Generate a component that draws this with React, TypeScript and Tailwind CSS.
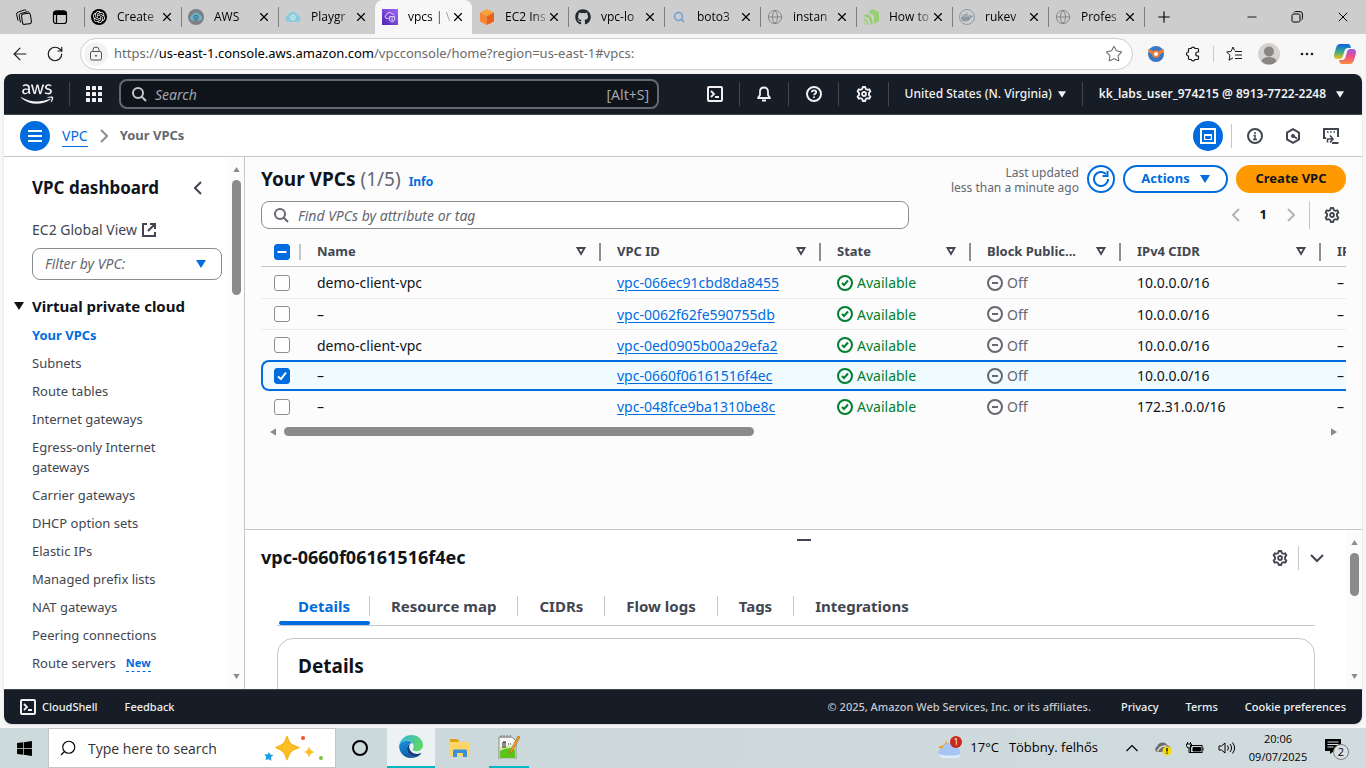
import React from "react";
import { FaAws, FaGithub, FaWindows } from "react-icons/fa";
import { SiOpenai, SiDocker } from "react-icons/si";
import { Globe, X, Plus, Search, RotateCw, ArrowLeft, Star, Minus } from "lucide-react";

const EMBER = "font-['Noto_Sans',sans-serif]";
const SEGOE = "font-['Open_Sans',sans-serif]";

type IconProps = { className?: string };

function Svg({ className = "size-4", children }: React.PropsWithChildren<IconProps>) {
  return (
    <svg viewBox="0 0 16 16" fill="none" stroke="currentColor" strokeWidth="2" aria-hidden="true" className={`shrink-0 ${className}`}>
      {children}
    </svg>
  );
}

function Gear({ className }: IconProps) {
  return (
    <Svg className={className}>
      <path
        strokeWidth="1.9"
        strokeLinejoin="round"
        d="M6.2 3 6.8 1h2.400L9.800 3l1.400.8 2-.5 1.200 2.100L13 6.900v2.200l1.400 1.500-1.200 2.100-2-.5-1.400.8-.6 2H6.800l-.6-2-1.400-.8-2 .5-1.200-2.100L3 9.100V6.900L1.600 5.400l1.200-2.100 2 .5Z"
      />
      <circle cx="8" cy="8" r="2" strokeWidth="1.8" />
    </Svg>
  );
}

function ShellIcon({ className }: IconProps) {
  return (
    <Svg className={className}>
      <rect x="1" y="1" width="14" height="14" rx="1" />
      <path d="m4 5 3 3-3 3M8 11h4" strokeWidth="1.8" />
    </Svg>
  );
}

function Caret({ className = "h-[8px] w-[10px]" }: IconProps) {
  return (
    <svg viewBox="0 0 10 8" fill="currentColor" aria-hidden="true" className={`shrink-0 ${className}`}>
      <path d="M0 0h10L5 8Z" />
    </svg>
  );
}

function Chevron({ dir, className = "h-[14px] w-[8px]" }: IconProps & { dir: "left" | "right" }) {
  return (
    <svg viewBox="0 0 8 14" fill="none" stroke="currentColor" strokeWidth="2" aria-hidden="true" className={`shrink-0 ${className}`}>
      <path d={dir === "left" ? "M7 1 1 7l6 6" : "m1 1 6 6-6 6"} />
    </svg>
  );
}

/* ---------- browser ---------- */

function CloudEye({ muted = false }: { muted?: boolean }) {
  return (
    <svg viewBox="0 0 16 16" className="size-4 shrink-0" aria-hidden="true">
      {muted && <circle cx="8" cy="8" r="8" fill="#7d8083" />}
      <path
        d={muted ? "M4.500 11.500a2.700 2.700 0 0 1-.3-5.300A4 4 0 0 1 11.700 6.100a2.800 2.800 0 0 1 .3 5.400Z" : "M3.500 13a3.400 3.400 0 0 1-.4-6.700A5 5 0 0 1 12.700 6.200a3.500 3.500 0 0 1 .3 6.800Z"}
        fill={muted ? "#67b7d1" : "#8ccbdc"}
      />
      <circle cx="8" cy="8.500" r="2.300" fill="none" stroke={muted ? "#4b6570" : "#d5eef5"} strokeWidth="1" />
      <circle cx="8" cy="8.500" r=".9" fill={muted ? "#4b6570" : "#d5eef5"} />
    </svg>
  );
}

function VpcIcon() {
  return (
    <svg viewBox="0 0 16 16" className="size-4 shrink-0" aria-hidden="true">
      <defs>
        <linearGradient id="vpcg" x1="0" y1="1" x2="1" y2="0">
          <stop offset="0" stopColor="#4d27aa" />
          <stop offset="1" stopColor="#a166ff" />
        </linearGradient>
      </defs>
      <path fill="url(#vpcg)" d="M0 0h16v16H0z" />
      <path
        d="M6.500 9.500H5a2 2 0 0 1-.4-3.900A3 3 0 0 1 10 4.800c1.200-.1 2 .7 2.100 1.500M7.600 7.600h5v3c0 1.200-1.500 2.100-2.500 2.500-1-.4-2.500-1.300-2.500-2.500ZM10.100 8.500v3.500"
        fill="none"
        stroke="#fff"
        strokeWidth=".8"
      />
    </svg>
  );
}

function Ec2Icon() {
  return (
    <svg viewBox="0 0 16 16" className="size-4 shrink-0" aria-hidden="true">
      <path d="m8 0 7 3.500L8 7 1 3.500Z" fill="#f9a13a" />
      <path d="M1 3.500 8 7v9l-7-3.500Z" fill="#f58536" />
      <path d="M15 3.500 8 7v9l7-3.500Z" fill="#e8601c" />
    </svg>
  );
}

function GreenIcon() {
  return (
    <svg viewBox="0 0 16 16" className="size-4 shrink-0" fill="#98cf74" aria-hidden="true">
      <path d="m5 3 5-3 6 3.500v8.500l-5 3V6.500Z" />
      <path d="M1 6.500 4 5c3 1 5 3.500 5.500 7v3l-2 1C7.500 11 5.500 8 1 7.500ZM1 9.500c2.500.5 4 2.500 4.500 6H3.800C3.500 13 2.500 12 1 11.500ZM1 13l1.500 2.500H1Z" />
    </svg>
  );
}

function OpenAiIcon() {
  return (
    <span className="flex size-4 shrink-0 items-center justify-center rounded-full bg-black text-white">
      <SiOpenai className="size-3" />
    </span>
  );
}

function DockerIcon() {
  return (
    <span className="flex size-4 shrink-0 items-center justify-center rounded-full border border-[#8b9ba3] text-[#8b9ba3]">
      <SiDocker className="size-3" />
    </span>
  );
}

function GlobeIcon() {
  return <Globe className="size-4 shrink-0 text-[#858585]" strokeWidth={1.5} />;
}

const TABS: { title: string; icon: React.ReactNode; active?: boolean }[] = [
  { title: "Create", icon: <OpenAiIcon /> },
  { title: "AWS", icon: <CloudEye muted /> },
  { title: "Playgr", icon: <CloudEye /> },
  { title: "vpcs | \\", icon: <VpcIcon />, active: true },
  { title: "EC2 Ins", icon: <Ec2Icon /> },
  { title: "vpc-lo", icon: <FaGithub className="size-4 shrink-0 text-[#24292e]" /> },
  { title: "boto3", icon: <Search className="size-4 shrink-0 p-0.5 text-[#6a9fd0]" strokeWidth={3} /> },
  { title: "instan", icon: <GlobeIcon /> },
  { title: "How to", icon: <GreenIcon /> },
  { title: "rukev", icon: <DockerIcon /> },
  { title: "Profes", icon: <GlobeIcon /> },
];

function BrowserTabs() {
  return (
    <div className="flex h-[34px] shrink-0 items-stretch bg-[#cdcdcd] text-[12px] text-black">
      <div className="flex w-[84px] items-center gap-5 pl-4">
        <button aria-label="Workspaces">
          <svg viewBox="0 0 16 16" fill="none" stroke="currentColor" className="size-4" aria-hidden="true">
            <rect x="6" y="4.500" width="9" height="10.500" rx="2" transform="rotate(-8 11 10)" />
            <path d="M4.500 13.500 3.200 6.800a2 2 0 0 1 1.500-2.300l6.500-1.700c1-.2 1.800.1 2.200.9" />
            <path d="M2 11.500.6 5.500a2 2 0 0 1 1.500-2.300L8 1c1-.3 1.800 0 2.200.8" />
          </svg>
        </button>
        <button aria-label="Tab actions">
          <svg viewBox="0 0 16 16" fill="none" stroke="currentColor" strokeWidth="1.200" className="size-4" aria-hidden="true">
            <rect x="1.500" y="2" width="13" height="12.500" rx="2.500" />
            <path d="M2 3.500c.5-1 1.200-1.500 2-1.500h8c.8 0 1.500.5 2 1.500V5.500H2Z" fill="currentColor" />
            <path d="M4.500 5v9" />
          </svg>
        </button>
      </div>
      {TABS.map((t, i) => (
        <div
          key={t.title}
          className={`flex shrink-0 items-center pr-1.5 ${i < 4 ? "w-[97px]" : "w-24"} ${
            t.active ? "rounded-t-lg bg-[#f7f7f7]" : ""
          }`}
        >
          <span className={`mr-1.5 h-5 w-px shrink-0 ${i === 3 || i === 4 ? "bg-transparent" : "bg-[#7f7f7f]"}`} />
          {t.icon}
          <span className="ml-2.5 flex-1 whitespace-nowrap [mask-image:linear-gradient(to_right,black_65%,rgba(0,0,0,0.25)_100%)]">{t.title}</span>
          <button aria-label={`Close ${t.title}`} className="flex size-4 shrink-0 items-center justify-center">
            <X className="size-3.5" strokeWidth={2} />
          </button>
        </div>
      ))}
      <div className="flex flex-1 items-center">
        <span className="h-5 w-px bg-[#7f7f7f]" />
        <button aria-label="New tab" className="ml-2.5">
          <Plus className="size-[18px]" strokeWidth={1.5} />
        </button>
        <div className="ml-auto flex items-center gap-8 pr-[15px]">
          <button aria-label="Minimise">
            <Minus className="size-3.5" strokeWidth={1.5} />
          </button>
          <button aria-label="Restore">
            <svg viewBox="0 0 12 12" fill="none" stroke="currentColor" className="size-3" aria-hidden="true">
              <rect x="1" y="3" width="8" height="8" rx="1.500" />
              <path d="M3 1.500c.3-.6.8-.9 1.500-.9H9A2.400 2.400 0 0 1 11.400 3v4.500c0 .7-.3 1.200-.9 1.500" />
            </svg>
          </button>
          <button aria-label="Close window">
            <X className="size-4" strokeWidth={1.5} />
          </button>
        </div>
      </div>
    </div>
  );
}

function AddressBar() {
  return (
    <div className="flex h-10 shrink-0 items-center bg-[#f7f7f7] px-2.5 text-[#1b1b1b]">
      <button aria-label="Back" className="mr-4">
        <ArrowLeft className="size-5" strokeWidth={1.4} />
      </button>
      <button aria-label="Refresh" className="mr-4">
        <RotateCw className="size-[18px]" strokeWidth={1.6} />
      </button>
      <div className="flex h-8 flex-1 items-center rounded-full border border-[#d0ccd2] bg-white px-[3px]">
        <button aria-label="Site information" className="flex size-6 items-center justify-center rounded-full bg-[#f3f3f3] text-[#555]">
          <svg viewBox="0 0 16 16" fill="none" stroke="currentColor" className="size-4" aria-hidden="true">
            <rect x="2.500" y="5.500" width="11" height="8.500" rx="1.500" />
            <path d="M5 5.500V4a3 3 0 0 1 6 0v1.500" />
            <circle cx="8" cy="9.700" r=".6" fill="currentColor" />
          </svg>
        </button>
        <span className={`ml-1.5 flex-1 text-[13px] text-[#6b6b6b] ${EMBER}`}>
          https://<span className="text-black">us-east-1.console.aws.amazon.com</span>/vpcconsole/home?region=us-east-1#vpcs:
        </span>
        <button aria-label="Add to favourites" className="mr-1.5">
          <Star className="size-[18px] text-[#6b6b6b]" strokeWidth={1.4} />
        </button>
      </div>
      <div className="ml-3.5 flex items-center">
        <button aria-label="Extension" className="mr-5">
          <svg viewBox="0 0 18 18" className="size-[18px]" aria-hidden="true">
            <circle cx="9" cy="9" r="8" fill="#3b78c4" />
            <path d="M.8 3.800 6 6h6l5.200-2.200-1.500 4L12.500 9.500h-7L2.300 7.800Z" fill="#f27b35" />
            <circle cx="9" cy="9" r="3.800" fill="#f27b35" />
            <circle cx="9" cy="9" r="2" fill="#fff" />
          </svg>
        </button>
        <button aria-label="Extensions">
          <svg viewBox="0 0 16 16" fill="none" stroke="currentColor" strokeLinejoin="round" strokeWidth="1.200" className="size-4" aria-hidden="true">
            <path d="M4.500 2.500h1.700a2 1.900 0 0 1 3.800 0h2.500a1 1 0 0 1 1 1V6h-.8a2 2 0 0 0 0 4h.8v2.500a1 1 0 0 1-1 1H10a2 1.900 0 0 1-3.800 0H4.500a1 1 0 0 1-1-1V10a2 2 0 0 1 0-4V3.500a1 1 0 0 1 1-1Z" />
          </svg>
        </button>
        <span className="mx-3 h-4 w-px bg-[#c8c8c8]" />
        <button aria-label="Favourites" className="mr-4">
          <svg viewBox="0 0 16 16" fill="none" stroke="currentColor" strokeLinejoin="round" className="size-4" aria-hidden="true">
            <path d="M8.500 4.500 7 1 5 5.500.6 6 4 9.200l-1 5 4-2.400M9 5.500h7M9 9h7M9 12.500h7" />
          </svg>
        </button>
        <button aria-label="Profile" className="mr-5">
          <svg viewBox="0 0 22 22" className="size-[22px]" aria-hidden="true">
            <circle cx="11" cy="11" r="11" fill="#d5d2cf" />
            <circle cx="11" cy="8.500" r="5" fill="#8b8681" />
            <path d="M3.500 18.500a7.500 4.500 0 0 1 15 0 11 11 0 0 1-15 0Z" fill="#8b8681" />
          </svg>
        </button>
        <button aria-label="Settings and more" className="mr-5">
          <svg viewBox="0 0 14 4" className="h-1 w-3.5" fill="currentColor" aria-hidden="true">
            <circle cx="2" cy="2" r="1.300" />
            <circle cx="7" cy="2" r="1.300" />
            <circle cx="12" cy="2" r="1.300" />
          </svg>
        </button>
        <button aria-label="Copilot">
          <svg viewBox="0 0 22 20" className="h-5 w-[22px]" aria-hidden="true">
            <defs>
              <linearGradient id="cpa" x1="0" y1="0" x2="0" y2="1">
                <stop offset="0" stopColor="#0a62e8" />
                <stop offset=".5" stopColor="#35a98b" />
                <stop offset="1" stopColor="#f5c518" />
              </linearGradient>
              <linearGradient id="cpb" x1="0" y1="0" x2="0" y2="1">
                <stop offset="0" stopColor="#9b5be8" />
                <stop offset=".5" stopColor="#ee4f86" />
                <stop offset="1" stopColor="#fb8c3c" />
              </linearGradient>
            </defs>
            <path d="M6 0h8c2 0 2.500 2 3 4h-3c-2 0-3 1-3.500 3L9 12c-.5 2-1.500 3-3.500 3H3c-3 0-3.500-3-2.500-6l1.500-5c.8-2.600 2-4 4-4Z" fill="url(#cpa)" />
            <path d="M16 20H8c-2 0-2.500-2-3-4h3c2 0 3-1 3.500-3L13 8c.5-2 1.500-3 3.500-3H19c3 0 3.500 3 2.500 6L20 16c-.8 2.600-2 4-4 4Z" fill="url(#cpb)" />
          </svg>
        </button>
      </div>
    </div>
  );
}

/* ---------- console chrome ---------- */

function Divider({ className = "" }: IconProps) {
  return <span className={`h-6 w-px shrink-0 bg-[#424650] ${className}`} />;
}

function ConsoleHeader() {
  return (
    <header className="flex h-[41px] shrink-0 items-center border-b border-[#424650] bg-[#161d26] pl-4 pr-[18px] text-[12px] font-semibold text-[#f0f0f3]">
      <a href="#home" aria-label="AWS home">
        <FaAws className="h-[26px] w-[34px]" />
      </a>
      <Divider className="ml-[15px] mr-4" />
      <button aria-label="All services">
        <svg viewBox="0 0 16 16" fill="currentColor" className="size-4" aria-hidden="true">
          {[0, 6, 12].map((y) => [0, 6, 12].map((x) => <rect key={`${x}-${y}`} x={x} y={y} width="4" height="4" rx=".6" />))}
        </svg>
      </button>
      <label className="ml-[17px] flex h-[30px] w-[540px] items-center rounded-lg border-2 border-[#656871] bg-[#0f141a] pl-2.5 pr-2 font-normal">
        <Svg className="size-4 text-[#c6c6cd]">
          <circle cx="7" cy="7" r="5" />
          <path d="m10.500 10.500 4.500 4.500" />
        </Svg>
        <input aria-label="Search" placeholder="Search" className="ml-2 min-w-0 flex-1 bg-transparent text-[14px] outline-none placeholder:italic placeholder:text-[#a4a4ad]" />
        <span className="text-[14px] text-[#a4a4ad]">[Alt+S]</span>
      </label>
      <div className="ml-auto flex items-center">
        <button aria-label="CloudShell">
          <ShellIcon />
        </button>
        <Divider className="mx-4" />
        <button aria-label="Notifications">
          <Svg>
            <path d="M8 1.500c-2.500 0-4 1.800-4 4.200V9l-2 3h12l-2-3V5.700c0-2.400-1.500-4.200-4-4.200Z" strokeLinejoin="round" strokeWidth="1.8" />
            <path d="M6 14.500h4" />
          </Svg>
        </button>
        <Divider className="ml-4 mr-[17px]" />
        <button aria-label="Help">
          <Svg>
            <circle cx="8" cy="8" r="7" />
            <path d="M5.800 6.200C5.900 5 6.800 4.300 8 4.300s2.200.8 2.200 1.900c0 1.500-2.200 1.500-2.200 3.100M8 10.500V12" strokeWidth="1.8" />
          </Svg>
        </button>
        <Divider className="ml-4 mr-[17px]" />
        <button aria-label="Settings">
          <Gear />
        </button>
        <Divider className="mx-4" />
        <button className="flex items-center font-medium">
          <span>United States (N. Virginia)</span>
          <Caret className="ml-1.5 h-[7px] w-2" />
        </button>
        <Divider className="mx-4" />
        <button className="flex items-center">
          <span>kk_labs_user_974215 @ 8913-7722-2248</span>
          <Caret className="ml-2.5 h-[7px] w-2" />
        </button>
      </div>
    </header>
  );
}

function BreadcrumbBar() {
  return (
    <div className="flex h-[42px] shrink-0 items-center border-b border-[#c6c6cd] bg-white px-4 text-[13px]">
      <button aria-label="Toggle navigation" className="flex size-[30px] items-center justify-center rounded-full bg-[#006ce0] text-white">
        <Svg>
          <path d="M1 3h14M1 8h14M1 13h14" />
        </Svg>
      </button>
      <nav aria-label="Breadcrumbs" className="ml-3 flex items-center">
        <a href="#vpc" className="border-b border-[#006ce0] text-[14px] text-[#006ce0]">VPC</a>
        <Chevron dir="right" className="mx-3 h-[14px] w-2 text-[#8c8c94]" />
        <span className="font-bold text-[#656871]">Your VPCs</span>
      </nav>
      <div className="ml-auto flex items-center pr-[7px] text-[#424650]">
        <button aria-label="Split panel" className="flex size-[30px] items-center justify-center rounded-full bg-[#006ce0] text-white">
          <Svg>
            <path d="M1 1h14v14H1z" />
            <path d="M4.600 7.500h6.800v4H4.600z" strokeWidth="1.200" />
            <path d="M4 7h8" />
          </Svg>
        </button>
        <span className="ml-2 mr-[15px] h-6 w-px bg-[#c6c6cd]" />
        <button aria-label="Info" className="mr-[22px]">
          <Svg>
            <circle cx="8" cy="8" r="7" />
            <path d="M8 4v2M6.500 7.500H8V12M6 11.500h4" strokeWidth="1.500" />
          </Svg>
        </button>
        <button aria-label="Diagnostics" className="mr-[22px]">
          <Svg>
            <path d="m8 1.200 6 3.400v6.800l-6 3.400-6-3.400V4.600Z" />
            <circle cx="8" cy="8" r="1.300" fill="currentColor" strokeWidth="1.500" />
            <path d="m8 8 4 2.500" />
          </Svg>
        </button>
        <button aria-label="Console recorder">
          <Svg>
            <path d="M3 10H1V1h14v8M9 15h6.500" />
            <path d="M4 4h1.500M7.200 4h1.500M10.500 4H12" strokeWidth="1.500" />
            <path d="M4.500 14.500V11h5M7 7.500 10 11l-3 3.500" strokeWidth="1.600" />
          </Svg>
        </button>
      </div>
    </div>
  );
}

/* ---------- side navigation ---------- */

const LINKS = [
  "Subnets",
  "Route tables",
  "Internet gateways",
  "Egress-only Internet gateways",
  "Carrier gateways",
  "DHCP option sets",
  "Elastic IPs",
  "Managed prefix lists",
  "NAT gateways",
  "Peering connections",
];

function ScrollTrack({ thumb }: { thumb: string }) {
  return (
    <div className="flex w-4 shrink-0 flex-col items-center bg-[#fcfcfc] py-[10px] text-[#8b8b8b]" aria-hidden="true">
      <Caret className="h-[5px] w-[9px] rotate-180" />
      <span className={`mt-2 w-[9px] rounded-full bg-[#8b8b8b] ${thumb}`} />
      <Caret className="mt-auto h-[5px] w-[9px]" />
    </div>
  );
}

function SideNav() {
  return (
    <aside className="flex w-[241px] shrink-0 border-r border-[#c6c6cd] bg-white text-[13px] leading-5 text-[#424650]">
      <div className="flex-1 overflow-hidden pl-7 pr-1.5">
        <div className="mt-5 flex items-center justify-between pr-5">
          <h2 className="text-[17px] font-bold leading-[22px] text-[#0f141a]">VPC dashboard</h2>
          <button aria-label="Close navigation">
            <Chevron dir="left" />
          </button>
        </div>
        <a href="#global" className="mt-[21px] flex items-center gap-1 text-[14px]">
          EC2 Global View
          <Svg className="size-4">
            <path d="M6 2H2v12h12v-4M9 2h5v5M14 2 7 9" />
          </Svg>
        </a>
        <button className="mt-2 flex h-8 w-[190px] items-center justify-between rounded-lg border border-[#8c8c94] pl-3 pr-[15px] text-[14px] italic text-[#656871]">
          Filter by VPC:
          <Caret className="h-2 w-[10px] text-[#006ce0]" />
        </button>
        <h3 className="-ml-[18px] mt-[15px] flex items-center gap-2 text-[15px] font-bold leading-[22px] text-[#0f141a]">
          <Caret className="h-2 w-[10px]" />
          Virtual private cloud
        </h3>
        <ul className="mt-2 flex flex-col gap-2">
          <li>
            <a href="#vpcs" className="font-bold text-[#006ce0]">Your VPCs</a>
          </li>
          {LINKS.map((l) => (
            <li key={l} className="pr-8">
              <a href="#nav">{l}</a>
            </li>
          ))}
          <li className="flex items-center gap-2.5">
            <a href="#nav">Route servers</a>
            <button className="border-b border-dashed border-[#006ce0] text-[11px] font-bold leading-4 text-[#006ce0]">New</button>
          </li>
        </ul>
      </div>
      <ScrollTrack thumb="h-[115px]" />
    </aside>
  );
}

/* ---------- table ---------- */

const ROWS = [
  { name: "demo-client-vpc", id: "vpc-066ec91cbd8da8455", cidr: "10.0.0.0/16" },
  { name: "–", id: "vpc-0062f62fe590755db", cidr: "10.0.0.0/16" },
  { name: "demo-client-vpc", id: "vpc-0ed0905b00a29efa2", cidr: "10.0.0.0/16" },
  { name: "–", id: "vpc-0660f06161516f4ec", cidr: "10.0.0.0/16", selected: true },
  { name: "–", id: "vpc-048fce9ba1310be8c", cidr: "172.31.0.0/16" },
];

const COLUMNS = [
  { label: "Name", width: "w-[300px]" },
  { label: "VPC ID", width: "w-[220px]" },
  { label: "State", width: "w-[150px]" },
  { label: "Block Public...", width: "w-[150px]" },
  { label: "IPv4 CIDR", width: "w-[200px]" },
  { label: "IPv6 CIDR", width: "w-[200px]" },
];

function Checkbox({ label, state }: { label: string; state: "off" | "on" | "mixed" }) {
  return (
    <label className="grid size-4 place-items-center">
      <input
        type="checkbox"
        aria-label={label}
        defaultChecked={state !== "off"}
        className={`col-start-1 row-start-1 size-4 appearance-none rounded-[3px] border ${
          state === "off" ? "border-[#8c8c94] bg-white" : "border-[#006ce0] bg-[#006ce0]"
        }`}
      />
      {state !== "off" && (
        <Svg className="pointer-events-none col-start-1 row-start-1 size-4 text-white">
          <path d={state === "on" ? "m4 8.500 3 2.500 5-6.500" : "M3.500 8h9"} />
        </Svg>
      )}
    </label>
  );
}

function VpcTable() {
  return (
    <div className="overflow-hidden">
      <table className="w-[1260px] table-fixed border-separate border-spacing-0 text-left text-[14px] text-[#0f141a]">
        <thead className="text-[13px] text-[#424650]">
          <tr className="h-[30px]">
            <th className="w-10 border-b border-[#c6c6cd] p-0">
              <div className="flex items-center border-r-2 border-[#c6c6cd] pl-[13px]">
                <Checkbox label="Select all" state="mixed" />
              </div>
            </th>
            {COLUMNS.map((c) => (
              <th key={c.label} className={`border-b border-[#c6c6cd] p-0 font-bold ${c.width}`}>
                <div className="flex h-[18px] items-center justify-between border-r-2 border-[#8c8c94] pl-4 pr-[13px]">
                  <span className="whitespace-nowrap">{c.label}</span>
                  <svg viewBox="0 0 10 9" fill="none" stroke="currentColor" strokeWidth="1.800" className="h-[9px] w-[10px] shrink-0" aria-hidden="true">
                    <path d="M1.500 1h7L5 7Z" />
                  </svg>
                </div>
              </th>
            ))}
          </tr>
        </thead>
        <tbody>
          {ROWS.map((r, i) => {
            const cell = r.selected
              ? "border-y-2 border-[#006ce0] bg-[#f0fbff]"
              : i === 0 || i === 4
                ? ""
                : "border-t border-[#ebebf0]";
            return (
              <tr key={r.id} className="h-[31px]">
                <td className={`p-0 ${cell} ${r.selected ? "rounded-l-lg border-l-2 pl-[11px]" : "pl-[13px]"}`}>
                  <Checkbox label={`Select ${r.id}`} state={r.selected ? "on" : "off"} />
                </td>
                <td className={`p-0 pl-4 ${cell}`}>{r.name}</td>
                <td className={`p-0 pl-4 ${cell}`}>
                  <a href={`#${r.id}`} className="text-[#006ce0] underline underline-offset-2">{r.id}</a>
                </td>
                <td className={`p-0 pl-4 text-[#00802f] ${cell}`}>
                  <span className="flex items-center gap-1">
                    <Svg>
                      <circle cx="8" cy="8" r="7" />
                      <path d="m5 8 2 2 4-4.500" />
                    </Svg>
                    Available
                  </span>
                </td>
                <td className={`p-0 pl-4 text-[#656871] ${cell}`}>
                  <span className="flex items-center gap-1">
                    <Svg>
                      <circle cx="8" cy="8" r="7" />
                      <path d="M5 8h6" />
                    </Svg>
                    Off
                  </span>
                </td>
                <td className={`p-0 pl-4 ${cell}`}>{r.cidr}</td>
                <td className={`p-0 pl-4 ${cell}`}>–</td>
              </tr>
            );
          })}
        </tbody>
      </table>
    </div>
  );
}

function VpcList() {
  return (
    <section className="flex min-h-0 flex-1 flex-col bg-[#fcfcfd] px-4 text-[13px]">
      <div className="flex items-center pt-1.5">
        <div className="flex items-baseline gap-2">
          <h1 className="text-[19px] font-bold leading-7 text-[#0f141a]">
            Your VPCs <span className="font-normal text-[#656871]">(1/5)</span>
          </h1>
          <a href="#info" className="text-[12px] font-bold leading-4 text-[#006ce0]">Info</a>
        </div>
        <p className="ml-auto pt-0.5 text-right text-[12px] leading-[15px] text-[#656871]">
          Last updated
          <br />
          less than a minute ago
        </p>
        <button aria-label="Refresh" className="ml-2 flex size-7 items-center justify-center rounded-full border-2 border-[#006ce0] bg-white text-[#006ce0]">
          <Svg>
            <path d="M15 8a7 7 0 1 1-2-4.900" />
            <path d="M14.500 0v5h-5" />
          </Svg>
        </button>
        <button className="ml-2 flex h-7 w-[105px] items-center justify-center gap-2.5 rounded-full border-2 border-[#006ce0] bg-white text-[13px] font-bold text-[#006ce0]">
          Actions
          <Caret className="h-2 w-[10px]" />
        </button>
        <button className="ml-2 h-7 w-[110px] rounded-full bg-[#ff9900] font-bold text-[#0f141a]">Create VPC</button>
      </div>
      <div className="mt-1.5 flex items-center">
        <label className="flex h-7 w-[648px] items-center rounded-lg border border-[#8c8c94] bg-white pl-[11px]">
          <Svg className="size-4 text-[#656871]">
            <circle cx="7" cy="7" r="5" />
            <path d="m10.500 10.500 4.500 4.500" />
          </Svg>
          <input aria-label="Find VPCs" placeholder="Find VPCs by attribute or tag" className="ml-[9px] min-w-0 flex-1 bg-transparent text-[14px] outline-none placeholder:italic placeholder:text-[#656871]" />
        </label>
        <div className="ml-auto flex items-center pr-1.5 text-[#b4b4bb]">
          <button aria-label="Previous page">
            <Chevron dir="left" />
          </button>
          <button aria-label="Page 1" className="mx-5 font-bold text-[#0f141a]">1</button>
          <button aria-label="Next page">
            <Chevron dir="right" />
          </button>
          <span className="mx-3.5 h-7 w-px bg-[#c6c6cd]" />
          <button aria-label="Preferences" className="text-[#424650]">
            <Gear />
          </button>
        </div>
      </div>
      <div className="mt-2">
        <VpcTable />
        <div className="mt-[5px] flex items-center px-2 text-[#8b8b8b]" aria-hidden="true">
          <Caret className="h-[6px] w-[8px] rotate-90" />
          <span className="ml-[7px] h-[9px] w-[470px] rounded-full bg-[#8b8b8b]" />
          <Caret className="ml-auto h-[6px] w-[8px] -rotate-90" />
        </div>
      </div>
    </section>
  );
}

/* ---------- split panel ---------- */

const PANEL_TABS = ["Details", "Resource map", "CIDRs", "Flow logs", "Tags", "Integrations"];

function SplitPanel() {
  return (
    <section className="flex h-40 shrink-0 overflow-hidden border-t border-[#c6c6cd] bg-white">
      <div className="flex min-w-0 flex-1 flex-col">
        <div className="flex justify-center pt-[9px]">
          <span className="ml-4 h-[2px] w-3.5 bg-[#424650]" />
        </div>
        <div className="mt-[3px] flex h-[27px] items-center pl-4 pr-[21px] text-[#424650]">
          <h2 className="text-[18px] font-bold text-[#0f141a]">vpc-0660f06161516f4ec</h2>
          <button aria-label="Panel preferences" className="ml-auto">
            <Gear />
          </button>
          <span className="mx-[10px] h-6 w-px bg-[#c6c6cd]" />
          <button aria-label="Collapse panel">
            <Svg>
              <path d="m2 5 6 6 6-6" />
            </Svg>
          </button>
        </div>
        <div className="ml-8 mr-[31px] mt-4 border-b border-[#c6c6cd]">
          <div role="tablist" className="flex text-[15px] font-bold leading-5 text-[#424650]">
            {PANEL_TABS.map((t, i) => (
              <button
                key={t}
                role="tab"
                aria-selected={i === 0}
                className={`flex h-[38px] flex-col ${i === 0 ? "ml-0.5 text-[#006ce0]" : ""}`}
              >
                <span className={`mt-[9px] h-5 ${i === 0 ? "px-[19px]" : "px-[21px]"} ${i < 5 ? "border-r border-[#c6c6cd]" : ""}`}>{t}</span>
                {i === 0 && <span className="mt-auto h-1 w-full rounded-full bg-[#006ce0]" />}
              </button>
            ))}
          </div>
        </div>
        <div className="ml-8 mr-[31px] mt-3 h-20 shrink-0 rounded-t-2xl border border-[#c6c6cd] px-5 pt-[15px]">
          <h3 className="text-[19px] font-bold leading-6 text-[#0f141a]">Details</h3>
        </div>
      </div>
      <ScrollTrack thumb="h-[43px]" />
    </section>
  );
}

function ConsoleFooter() {
  return (
    <footer className="flex h-[35px] shrink-0 items-center border-t border-[#424650] bg-[#161d26] px-4 text-[11px] font-medium text-[#f0f0f3]">
      <button className="flex items-center gap-1.5">
        <ShellIcon />
        CloudShell
      </button>
      <a href="#feedback" className="ml-[27px]">Feedback</a>
      <span className="ml-auto text-[#c6c6cd]">© 2025, Amazon Web Services, Inc. or its affiliates.</span>
      <a href="#privacy" className="ml-[30px]">Privacy</a>
      <a href="#terms" className="ml-[27px]">Terms</a>
      <a href="#cookies" className="ml-[27px]">Cookie preferences</a>
    </footer>
  );
}

/* ---------- taskbar ---------- */

function Sparkles() {
  return (
    <svg viewBox="0 0 62 28" className="h-7 w-[62px] shrink-0" aria-hidden="true">
      <path d="M24 2.500c2 7 4 9 12 11-8 2.500-10 4.500-12 12-2-7.500-4-9.500-11-12 7-2 9-4 11-11Z" fill="#fbbf24" stroke="#f8b81c" strokeWidth="1.500" strokeLinejoin="round" />
      <path d="M46 12c.8 3.500 1.500 4.500 5.500 6-4 1.500-4.700 2.500-5.500 6-.8-3.500-1.500-4.500-5-6 3.500-1.500 4.200-2.500 5-6Z" fill="#fbbf24" />
      <path d="m6 18 1.200 2.500 3.300.5-2.500 2.300.5 3.500-3-1.600-3 .8.700-3.200-2-2.300 3.500-.3Z" fill="#1ba1e2" />
      <circle cx="40" cy="4" r="2.100" fill="#f0592a" />
      <circle cx="58" cy="24" r="2" fill="#7ac143" />
    </svg>
  );
}

function EdgeIcon() {
  return (
    <svg viewBox="0 0 24 24" className="size-6" aria-hidden="true">
      <defs>
        <linearGradient id="edga" x1="0" y1="0" x2="1" y2=".4">
          <stop offset="0" stopColor="#2bb5e8" />
          <stop offset="1" stopColor="#5fd668" />
        </linearGradient>
        <linearGradient id="edgb" x1="0" y1="0" x2=".5" y2="1">
          <stop offset="0" stopColor="#1b95e0" />
          <stop offset="1" stopColor="#0c59a4" />
        </linearGradient>
      </defs>
      <path d="M.2 11A12 12 0 0 1 12 0c7.500 0 12 5 12 10 0 4-3 6.200-6.500 6.200-2.500 0-3.800-1-3.800-2 0-.8 1-1.200 1-3 0-2.700-2.700-5.400-6.500-5.400C4.500 5.800 1 8 .2 11Z" fill="url(#edga)" />
      <path d="M.1 12c0-4 4-6.200 8.100-6.200 2.300 0 4.200 1 5.300 2.500C10.500 8 8 10.500 8 14c0 5 4.500 9 10 7.500A12 12 0 0 1 .1 12Z" fill="url(#edgb)" />
      <path d="M8 14c0-3 1.500-4.500 3-5-1 1.500-1 3.200-.5 4.800C11.500 17 14.500 19 18 19c2 0 3.500-.7 4.500-1.200-.8 1.600-2.300 3-4.500 3.900-5.500 1.400-10-2.700-10-7.700Z" fill="#123f82" />
    </svg>
  );
}

function Taskbar() {
  return (
    <div className="flex h-10 shrink-0 items-stretch bg-gradient-to-r from-[#ccdadc] via-[#ccd8db] to-[#d2dcdf] text-black">
      <button aria-label="Start" className="flex w-12 items-center justify-center">
        <FaWindows className="size-[17px]" />
      </button>
      <label className="flex w-[288px] items-center border border-[#c4c4c4] bg-white pl-2.5 pr-2.5">
        <Search className="size-[18px] -scale-x-100" strokeWidth={1.5} />
        <input aria-label="Type here to search" placeholder="Type here to search" className="ml-[11px] min-w-0 flex-1 bg-transparent text-[14px] outline-none placeholder:text-[#333]" />
        <Sparkles />
      </label>
      <button aria-label="Cortana" className="flex w-12 items-center justify-center">
        <span className="size-4 rounded-full border-2 border-black" />
      </button>
      <button aria-label="Microsoft Edge" className="ml-[3px] flex w-12 items-center justify-center border-b-2 border-[#00b7c3] bg-[#ecf1f3]">
        <EdgeIcon />
      </button>
      <button aria-label="File Explorer" className="ml-px flex w-12 items-center justify-center">
        <svg viewBox="0 0 20 18" className="h-[18px] w-5" aria-hidden="true">
          <path d="M0 0h7l2 2v2H0Z" fill="#e0a010" />
          <path d="M0 3h20v14H0Z" fill="#fdd567" />
          <path d="M3 18v-6l1-1.500h12l1 1.500v6h-4v-4H7v4Z" fill="#3a8fd6" />
        </svg>
      </button>
      <button aria-label="Notepad++" className="ml-[5px] flex w-10 items-center justify-center border-b-2 border-[#00b7c3]">
        <svg viewBox="0 0 22 24" className="h-6 w-[22px]" aria-hidden="true">
          <path d="M1 2h13l4 4v18H1Z" fill="#f7f7f7" stroke="#8a8a8a" />
          <path d="M2 15c5-3 10-3 15-1v9H2Z" fill="#5cc21c" />
          <path d="M2 12c5-2 10-2 15 0v3C12 12 7 13 2 16Z" fill="#d3ec9e" />
          <path d="M5 7v6M7 7v6M5 7h3M10 9h1M12 9h1" stroke="#222" fill="none" />
          <path d="M3 0v3M6 0v3M9 0v3M12 0v3" stroke="#777" />
          <path d="m20 1 2 1-8 15-2.500 2 .5-3Z" fill="#f0a01e" stroke="#8a5a10" strokeWidth=".5" />
        </svg>
      </button>
      <div className="ml-auto flex items-center pr-[17px] text-[13px]">
        <button className="flex items-center">
          <svg viewBox="0 0 26 24" className="h-6 w-[26px]" aria-hidden="true">
            <path d="M9 3c0 4 3 7 8 7-1 3-4 5-8 5-3 0-6-2-7.500-4.500C6 10.500 9.500 7.500 9 3Z" fill="#f29b1d" />
            <path d="M6 22a5 5 0 0 1-.5-9.900A6.500 6.500 0 0 1 18 11.500a5.300 5.300 0 0 1 1 10.500Z" fill="#a6c6f5" />
            <path d="M1.500 18c.5 2.500 2.500 4 4.500 4h13c2.500 0 4.500-1.500 5-4-5 2-16 2-22.500 0Z" fill="#dfeafc" />
            <circle cx="19" cy="6" r="6" fill="#c8281e" />
            <text x="19" y="9" textAnchor="middle" fontSize="9" fill="#fff">1</text>
          </svg>
          <span className="ml-[7px]">17°C</span>
          <span className="ml-2.5">Többny. felhős</span>
        </button>
        <svg viewBox="0 0 12 8" fill="none" stroke="currentColor" strokeWidth="1.200" className="ml-7 h-2 w-3" aria-hidden="true">
          <path d="m.5 7 5.500-5.500L11.500 7" />
        </svg>
        <svg viewBox="0 0 18 16" className="ml-4 h-4 w-[18px]" aria-hidden="true">
          <path d="M3 12a3 3 0 0 1 0-5.500C4 3.500 7 2 9.500 2.500c2 .3 3.300 1.500 4 3C15.500 6 16.500 7 16.500 9L8 12Z" fill="#6e6e6e" />
          <path d="M3.500 11.500C5 7.500 8 5.500 12.500 6" stroke="#ddd" fill="none" strokeWidth="1.500" />
          <circle cx="13" cy="11" r="4.500" fill="#f7dc00" />
          <path d="M13 8v3.500M13 12.500v1.200" stroke="#000" strokeWidth="1.300" />
        </svg>
        <svg viewBox="0 0 18 14" fill="none" stroke="currentColor" className="ml-3.5 h-3.5 w-[18px]" aria-hidden="true">
          <rect x="4.500" y="4.500" width="11.500" height="7" />
          <path d="M7 6.500h7.500v3.500H7zM17 6.500v3" fill="currentColor" />
          <path d="M1.500 1v2M4.500 1v2M.5 3h5v1.500a2.500 2.500 0 0 1-5 0ZM3 7v4.500h1.500" />
        </svg>
        <svg viewBox="0 0 18 16" fill="none" stroke="currentColor" className="ml-3.5 h-4 w-[18px]" aria-hidden="true">
          <path d="M1 6h2.500L7 3v10L3.500 10H1ZM9.500 5.500a4 4 0 0 1 0 5M12 4a6.500 6.500 0 0 1 0 8M14.500 2.500a9 9 0 0 1 0 11" />
        </svg>
        <div className="ml-3 flex w-[60px] flex-col items-center text-[11px] leading-[18px]">
          <span>20:06</span>
          <span>09/07/2025</span>
        </div>
        <button aria-label="Notifications" className="ml-[17px]">
          <svg viewBox="0 0 24 24" className="size-6" aria-hidden="true">
            <path d="M0 3h16v12H9l-4 3v-3H0Z" fill="#000" />
            <path d="M2.500 6h11M2.500 8.500h11M2.500 11h6" stroke="#d2dcdf" />
            <circle cx="16" cy="16" r="7.500" fill="#d9dee0" stroke="#7d7d7d" />
            <text x="16" y="20" textAnchor="middle" fontSize="11" fill="#000">2</text>
          </svg>
        </button>
      </div>
    </div>
  );
}

export default function App() {
  return (
    <div className={`flex h-screen flex-col overflow-hidden bg-[#f7f7f7] ${SEGOE}`}>
      <BrowserTabs />
      <AddressBar />
      <div className={`mx-1 mb-1 flex min-h-0 flex-1 flex-col overflow-hidden rounded-lg bg-white shadow ${EMBER}`}>
        <ConsoleHeader />
        <BreadcrumbBar />
        <div className="flex min-h-0 flex-1">
          <SideNav />
          <main className="flex min-w-0 flex-1 flex-col">
            <VpcList />
            <SplitPanel />
          </main>
        </div>
        <ConsoleFooter />
      </div>
      <Taskbar />
    </div>
  );
}
